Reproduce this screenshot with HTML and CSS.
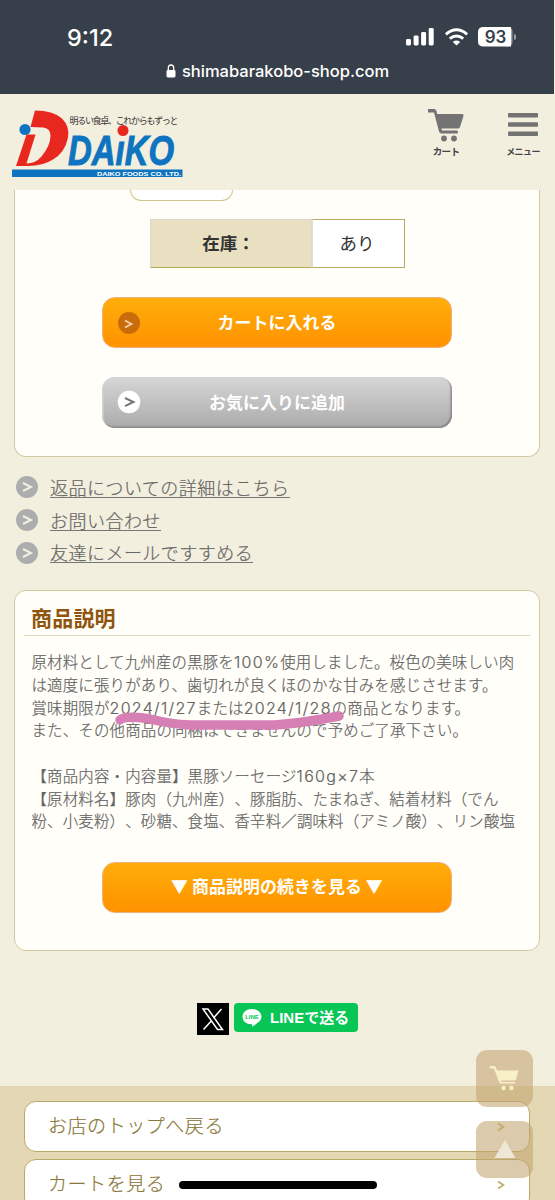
FILE: index.html
```
<!DOCTYPE html>
<html lang="ja">
<head>
<meta charset="utf-8">
<title>島原工房</title>
<link rel="stylesheet" href="styles.css">
</head>
<body>
<div class="screen">
  <div class="browser">
    <div class="status">
      <span class="time">9:12</span>
      <svg class="status-icons" width="114" height="22" viewBox="0 0 114 22">
        <g fill="#fff">
          <rect x="7" y="12" width="5" height="6.500" rx="1.400"/><rect x="14.600" y="8.500" width="5" height="10" rx="1.400"/><rect x="22.100" y="5" width="5" height="13.500" rx="1.400"/><rect x="29.700" y="1" width="5" height="17.500" rx="1.400"/>
          <path d="M57.500 18.500l-3.700-3.600q3.700-2.900 7.400 0z"/>
        </g>
        <g fill="none" stroke="#fff" stroke-width="3">
          <path d="M46.900 7.300q10.600-9 21.200 0"/><path d="M50.800 11.700q6.700-5.400 13.400 0"/>
        </g>
        <path fill="#99a0a6" d="M107 0h1.500q5 0 5 5v9.500q0 5-5 5H107z"/>
        <path fill="#fff" d="M84.500 0H112v19.500H84.500q-5.500 0-5.500-5V5q0-5 5.500-5z"/>
        <text x="96.500" y="15.700" text-anchor="middle" class="battery">93</text>
      </svg>
      <i class="battery-tip"></i>
    </div>
    <div class="address">
      <svg width="10" height="14" viewBox="0 0 10 14"><rect x="0.500" y="6" width="9" height="7.500" rx="1.400" fill="#fff"/><path d="M2.300 7V4q0-3 2.700-3t2.700 3v3" fill="none" stroke="#fff" stroke-width="1.300"/></svg>
      <span>shimabarakobo-shop.com</span>
    </div>
  </div>

  <header class="header">
    <svg class="logo" width="174" height="70" viewBox="0 0 174 70">
      <path fill="#e8281f" d="M24 1.500q18 0 27 8 8 8 6 19-3 15-15 22-10 6.500-25 6.500H5L15.500 25.500h9L15.500 54.500q9 0 15-7 9-11 9-21 0-7-7-8l-13-.5z"/>
      <circle cx="14" cy="20.500" r="5.600" fill="#0e74bf"/>
      <text class="tagline" x="58.500" y="14.500" textLength="109">明るい食卓、これからもずっと</text>
      <text class="brand" x="57" y="55.500" textLength="106" lengthAdjust="spacingAndGlyphs">DAıKO</text>
      <circle cx="112" cy="21.500" r="5.500" fill="#e8281f"/>
      <rect x="1" y="60.500" width="170.500" height="7.500" fill="#0e74bf"/>
      <text class="company" x="86" y="66.500" textLength="84" lengthAdjust="spacingAndGlyphs">DAIKO FOODS CO. LTD.</text>
    </svg>
    <nav class="tools">
      <a class="tool">
        <svg width="36" height="34" viewBox="0 0 36 34" fill="#737373"><path d="M0 0h6q2 0 2.500 2l.6 3H34q2 0 1.500 2L32 18q-.5 1.500-2 1.500H13.500l.6 2H29q1 0 1 1.500t-1 1.500H13.500q-2 0-2.500-2L6 3.500H0z"/><circle cx="16" cy="29.500" r="2.900"/><circle cx="26" cy="29.500" r="2.900"/></svg>
        <span>カート</span>
      </a>
      <a class="tool menu">
        <svg width="32" height="34" viewBox="0 0 32 34" fill="#737373"><rect x="1" y="4" width="30" height="4.500" rx="1"/><rect x="1" y="13.200" width="30" height="4.500" rx="1"/><rect x="1" y="22.500" width="30" height="4.500" rx="1"/></svg>
        <span>メニュー</span>
      </a>
    </nav>
  </header>

  <section class="card purchase">
    <div class="quantity"></div>
    <div class="stock"><div class="stock-name">在庫：</div><div class="stock-value">あり</div></div>
    <a class="button orange"><svg class="disc" width="24" height="24" viewBox="0 0 24 24"><circle cx="12" cy="12" r="11" fill="#c96c0a"/><path d="M8 9.500l6.500 3.500L8 16.500" fill="none" stroke="#fbd3ae" stroke-width="1.800"/></svg><span>カートに入れる</span></a>
    <a class="button grey"><svg class="disc" width="24" height="24" viewBox="0 0 24 24"><circle cx="12" cy="12" r="11.300" fill="#fff"/><path d="M8 8l8.500 4L8 16.200" fill="none" stroke="#777" stroke-width="2"/></svg><span>お気に入りに追加</span></a>
  </section>

  <ul class="links">
    <li><svg width="24" height="24" viewBox="0 0 24 24"><circle cx="12" cy="12" r="11" fill="#adadad"/><path d="M8 8l8 4-8 4" fill="none" stroke="#f3efdf" stroke-width="2"/></svg><a>返品についての詳細はこちら</a></li>
    <li><svg width="24" height="24" viewBox="0 0 24 24"><circle cx="12" cy="12" r="11" fill="#adadad"/><path d="M8 8l8 4-8 4" fill="none" stroke="#f3efdf" stroke-width="2"/></svg><a>お問い合わせ</a></li>
    <li><svg width="24" height="24" viewBox="0 0 24 24"><circle cx="12" cy="12" r="11" fill="#adadad"/><path d="M8 8l8 4-8 4" fill="none" stroke="#f3efdf" stroke-width="2"/></svg><a>友達にメールですすめる</a></li>
  </ul>

  <section class="card description">
    <h2>商品説明</h2>
    <div class="copy">
      <p>原材料として九州産の黒豚を<span class="num">100%</span>使用しました。桜色の美味しい肉</p>
      <p>は適度に張りがあり、歯切れが良くほのかな甘みを感じさせます。</p>
      <p>賞味期限が<span class="num">2024/1/27</span>または<span class="num">2024/1/28</span>の商品となります。</p>
      <p>また、その他商品の同梱はできませんので予めご了承下さい。</p>
      <p class="blank"></p>
      <p>【商品内容・内容量】黒豚ソーセージ<span class="num">160g×7</span>本</p>
      <p>【原材料名】豚肉（九州産）、豚脂肪、たまねぎ、結着材料（でん</p>
      <p>粉、小麦粉）、砂糖、食塩、香辛料／調味料（アミノ酸）、リン酸塩</p>
      <svg class="marker" width="240" height="30" viewBox="0 0 240 30"><path d="M10 17C14 13 30 14 40 16Q60 21 80 22H165Q178 21 190 19.500T229 13" fill="none" stroke="#d67fb4" stroke-width="9.500" stroke-linecap="round" stroke-linejoin="round"/></svg>
    </div>
    <a class="button orange more"><span>▼ 商品説明の続きを見る ▼</span></a>
  </section>

  <div class="share">
    <svg width="32" height="32" viewBox="0 0 32 32"><rect width="32" height="32" fill="#000"/><g fill="none" stroke="#fff" stroke-width="1.500"><path d="M6 6h5l14.500 20.500h-5z"/><path d="M24.500 6l-8 9M14.500 17.700L6.500 26.500"/></g></svg>
    <a class="line">
      <svg width="20" height="18" viewBox="0 0 20 18"><path fill="#fff" d="M10 0c5.500 0 9.500 3.300 9.500 7.700 0 4-5 7.300-9.500 10.100q.6-2-.5-2.500C4 15 .5 12 .5 7.700.5 3.300 4.500 0 10 0z"/><text x="10" y="10" text-anchor="middle" class="line-mark">LINE</text></svg>
      <span>LINEで送る</span>
    </a>
  </div>

  <footer class="footer">
    <a class="row"><span>お店のトップへ戻る</span><svg width="8" height="10" viewBox="0 0 8 10"><path d="M1 1.500l5.500 3.500L1 8.500" fill="none" stroke="#bfae68" stroke-width="1.800"/></svg></a>
    <a class="row"><span>カートを見る</span><svg width="8" height="10" viewBox="0 0 8 10"><path d="M1 1.500l5.500 3.500L1 8.500" fill="none" stroke="#bfae68" stroke-width="1.800"/></svg></a>
  </footer>

  <div class="floating">
    <a class="float"><svg width="30" height="26" viewBox="0 0 30 26" fill="#f8f1c8"><path d="M0 0h4q1.500 0 2 1.500L7 4.500h21.500L26 13.500q-.3 1-1.500 1H11l.4 1.500H25v1.500H11q-1.500 0-2-1.500L4 2.500H0z"/><circle cx="13.500" cy="22" r="2.200"/><circle cx="21.500" cy="22" r="2.200"/></svg></a>
    <a class="float"><svg width="22" height="19" viewBox="0 0 22 19"><path d="M11 0l10.500 18H.5z" fill="#efe7d5"/></svg></a>
  </div>
  <div class="home-bar"></div>
</div>
</body>
</html>
```
FILE: styles.css
```
* { box-sizing: border-box; }
body { margin: 0; background: #f3efdf; font-family: "Noto Sans CJK JP", sans-serif; }
.screen { position: relative; width: 555px; height: 1200px; overflow: hidden; color: #666; }
.browser { width: 554px; height: 94px; background: #373f4a; color: #fff; font-family: Inter, sans-serif; }
.status { display: flex; height: 60px; padding: 27px 0 0 67px; }
.status-icons { margin-left: auto; }
.battery-tip { width: 2px; height: 6px; margin: 7px 38px 0 1px; border-radius: 0 2px 2px 0; background: #99a0a6; }
.time { font-size: 23.500px; line-height: 21px; font-weight: 500; }
.battery { font: 600 17px Inter, sans-serif; fill: #373f4a; }
.address { display: flex; align-items: center; justify-content: center; gap: 6px; height: 22px; padding-left: 1px; font-size: 16.500px; font-weight: 500; }
.header { display: flex; justify-content: space-between; height: 96px; padding: 15px 14px 0 11px; }
.logo { overflow: visible; }
.tagline { font: 9px "Noto Sans CJK JP", sans-serif; fill: #333; }
.brand { font: italic bold 42px "Liberation Sans", sans-serif; fill: #0e74bf; stroke: #0e74bf; stroke-width: 1px; }
.company { font: bold 6px "Liberation Sans", sans-serif; fill: #fff; }
.tools { display: flex; gap: 41px; }
.tool { display: flex; flex-direction: column; align-items: center; width: 36px; font-size: 9.500px; line-height: 17px; font-weight: 700; color: #444; white-space: nowrap; }
.tool span { margin-top: 0; letter-spacing: -0.6px; }
.menu { font-size: 9px; }
.card { width: 526px; margin-left: 14px; background: #fffef8; border: 1.500px solid #d3c9a0; border-radius: 12px; }
.purchase { height: 267px; border-top: 0; border-radius: 0 0 12px 12px; display: flex; flex-direction: column; }
.quantity { width: 103px; height: 11px; margin-left: 115px; background: #fff; border: 1px solid #d3c58a; border-top: 0; border-radius: 0 0 13px 13px; }
.stock { display: flex; width: 255px; height: 49px; margin: 18px 0 0 135px; line-height: 45px; font-size: 17.500px; text-align: center; color: #333; }
.stock-name { width: 162px; background: #e9e0c1; border: 1px solid #ddd8d0; border-bottom-color: #b8a960; font-weight: 700; padding-right: 5px; }
.stock-value { width: 93px; background: #fff; border: 1.500px solid #b8a960; border-left-color: #ddd; padding-right: 3px; }
.button { position: relative; display: flex; align-items: center; justify-content: center; width: 350px; height: 51px; margin-left: 87px; border-radius: 13px; color: #fff; font-size: 16.900px; font-weight: 700; letter-spacing: 0.1px; }
.button span { padding-bottom: 3px; }
.orange { margin-top: 29px; border: 1.500px solid #eeb07c; background: linear-gradient(#ffae0a, #ff9200); }
.grey { margin-top: 29px; background: linear-gradient(#d6d6d6, #ababab); box-shadow: inset -1.500px -1.500px 1.500px #88888c, inset 1.500px 1.500px 1px #d4d4d4; }
.disc { position: absolute; left: 14px; top: 13px; }
.grey .disc { left: 15px; top: 13px; }
.links { list-style: none; margin: 15px 0 0; padding: 0 0 0 15px; }
.links li { display: flex; align-items: center; gap: 11px; height: 32.800px; font-size: 18px; font-weight: 300; letter-spacing: 0.47px; -webkit-text-stroke: 0.2px; }
.links svg { margin-top: -2px; }
.links a { margin-top: -2px; border-bottom: 1.500px solid #777; line-height: 20px; }
.description { height: 361px; margin-top: 20px; }
.description h2 { height: 31px; margin: 14px 9px 0; padding-left: 7px; border-bottom: 1.500px solid #e0d7b8; font-size: 21px; line-height: 25px; color: #8f550f; letter-spacing: 0.2px; }
.copy { position: relative; margin: 14px 0 0 16.500px; font-size: 15.400px; font-weight: 300; line-height: 22.700px; letter-spacing: 0.22px; white-space: nowrap; color: #636363; text-spacing-trim: space-all; -webkit-text-stroke: 0.2px; }
.copy p { height: 22.700px; margin: 0; }
.num { font-family: Inter, sans-serif; font-size: 16px; font-weight: 300; letter-spacing: 1.300px; line-height: 1; }
.marker { position: absolute; left: 78px; top: 53px; }
.more { margin-top: 30px; }
.share { display: flex; gap: 5px; height: 83px; margin: 52px 0 0 197px; }
.line { display: flex; align-items: center; gap: 8px; width: 124px; height: 29px; padding-left: 8px; border-radius: 4px; background: #07c655; color: #fff; font: bold 15px "Liberation Sans", "Noto Sans CJK JP", sans-serif; }
.line span { padding-bottom: 2px; white-space: nowrap; }
.line-mark { font: bold 6px "Liberation Sans", sans-serif; fill: #07c655; }
.footer { display: flex; flex-direction: column; gap: 7px; height: 160px; padding: 15px 25px 0 24px; background: #e3d8b3; }
.row { display: flex; flex: none; align-items: center; justify-content: space-between; height: 51px; padding: 0 24px 0 23px; background: #fff; border: 1.500px solid #b9a968; border-radius: 12px; font-size: 19px; font-weight: 300; letter-spacing: 0.55px; color: #8a783a; -webkit-text-stroke: 0.2px; }
.row span { padding-bottom: 4px; }
.floating { position: absolute; left: 476px; top: 1050px; display: flex; flex-direction: column; gap: 14px; }
.float { display: flex; align-items: center; justify-content: center; width: 57px; height: 57px; border-radius: 11px; background: rgba(194, 164, 112, 0.58); }
.home-bar { position: absolute; left: 179px; top: 1181px; width: 198px; height: 8px; border-radius: 4px; background: #000; }
```
